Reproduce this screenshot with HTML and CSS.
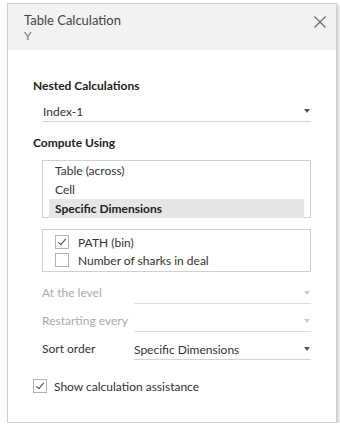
FILE: index.html
```html
<!DOCTYPE html>
<html lang="en">
<head>
    <meta charset="UTF-8">
    <meta name="viewport" content="width=device-width, initial-scale=1.0">
    <title>Table Calculation</title>
    <link rel="stylesheet" href="styles.css">
</head>
<body>
    <div class="dialog">
        <div class="dialog-header">
            <div>
                <div class="dialog-title">Table Calculation</div>
                <div class="dialog-sub">Y</div>
            </div>
            <svg class="close" width="12" height="12" viewBox="0 0 12 12">
                <path d="M0.5 0.5 L11.5 11.5 M11.5 0.5 L0.5 11.5" stroke="#666" stroke-width="1.1" fill="none"/>
            </svg>
        </div>
        <div class="dialog-body">
            <div class="section-title">Nested Calculations</div>
            <div class="dropdown nested">
                <span>Index-1</span>
                <span class="arrow"></span>
            </div>

            <div class="section-title">Compute Using</div>
            <div class="listbox">
                <div class="list-item">Table (across)</div>
                <div class="list-item">Cell</div>
                <div class="list-item selected">Specific Dimensions</div>
            </div>

            <div class="checklist">
                <div class="check-row">
                    <span class="checkbox checked"></span>
                    <span>PATH (bin)</span>
                </div>
                <div class="check-row">
                    <span class="checkbox"></span>
                    <span>Number of sharks in deal</span>
                </div>
            </div>

            <div class="field-row disabled">
                <span class="field-label">At the level</span>
                <div class="dropdown"><span></span><span class="arrow"></span></div>
            </div>
            <div class="field-row disabled">
                <span class="field-label">Restarting every</span>
                <div class="dropdown"><span></span><span class="arrow"></span></div>
            </div>
            <div class="field-row">
                <span class="field-label">Sort order</span>
                <div class="dropdown"><span>Specific Dimensions</span><span class="arrow"></span></div>
            </div>

            <div class="check-row assist">
                <span class="checkbox checked"></span>
                <span>Show calculation assistance</span>
            </div>
        </div>
    </div>
</body>
</html>
```

FILE: styles.css
```css
body {
    margin: 0;
    background-color: #fff;
    font-family: Lato, "Liberation Sans", sans-serif;
    font-size: 12px;
    color: #333;
}
.dialog {
    box-sizing: border-box;
    width: 330px;
    height: 420px;
    margin: 3px 0 0 7px;
    border: 1px solid #cfcfcf;
    box-shadow: 2px 2px 3px rgba(0,0,0,0.18);
    background-color: #fff;
}
.dialog-header {
    display: flex;
    justify-content: space-between;
    align-items: flex-start;
    height: 46px;
    box-sizing: border-box;
    padding: 8px 10px 0 16px;
    background-color: #f2f2f2;
}
.dialog-title {
    font-size: 13px;
    line-height: 16px;
    color: #444;
}
.dialog-sub {
    font-size: 12px;
    line-height: 15px;
    color: #777;
}
.close {
    margin-top: 4px;
}
.dialog-body {
    padding: 28px 25px 0 25px;
}
.section-title {
    font-weight: bold;
    line-height: 16px;
    color: #222;
}
.dropdown {
    display: flex;
    justify-content: space-between;
    align-items: center;
    height: 20px;
    border-bottom: 1px solid #d4d4d4;
}
.dropdown.nested {
    margin: 7px 0 13px 9px;
    padding-left: 1px;
}
.arrow {
    width: 0;
    height: 0;
    margin-right: 1px;
    border-left: 3.5px solid transparent;
    border-right: 3.5px solid transparent;
    border-top: 4px solid #555;
}
.listbox {
    margin: 9px 0 0 9px;
    height: 56px;
    border: 1px solid #d0d0d0;
    padding: 0 6px;
}
.list-item {
    line-height: 19px;
    padding-left: 6px;
}
.list-item.selected {
    background-color: #e6e6e6;
    font-weight: bold;
    color: #222;
}
.checklist {
    margin: 11px 0 4px 9px;
    height: 38px;
    border: 1px solid #d0d0d0;
    padding: 3px 12px 0;
}
.check-row {
    display: flex;
    align-items: center;
    gap: 9px;
    height: 18px;
}
.checkbox {
    box-sizing: border-box;
    width: 14px;
    height: 14px;
    border: 1px solid #b3b3b3;
    background-color: #fff;
    display: flex;
    align-items: center;
    justify-content: center;
}
.checkbox.checked::after {
    content: "";
    width: 3px;
    height: 7px;
    margin-top: -2px;
    border-right: 1.3px solid #444;
    border-bottom: 1.3px solid #444;
    transform: rotate(40deg);
}
.field-row {
    display: flex;
    align-items: flex-end;
    margin-left: 9px;
    height: 28px;
}
.field-row .field-label {
    width: 92px;
    line-height: 20px;
    padding-bottom: 1px;
}
.field-row .dropdown {
    flex: 1;
}
.field-row.disabled {
    color: #aaa;
}
.field-row.disabled .arrow {
    border-top-color: #ccc;
}
.field-row.disabled .dropdown {
    border-bottom-color: #ddd;
}
.assist {
    margin-top: 17px;
    gap: 7px;
}
```
